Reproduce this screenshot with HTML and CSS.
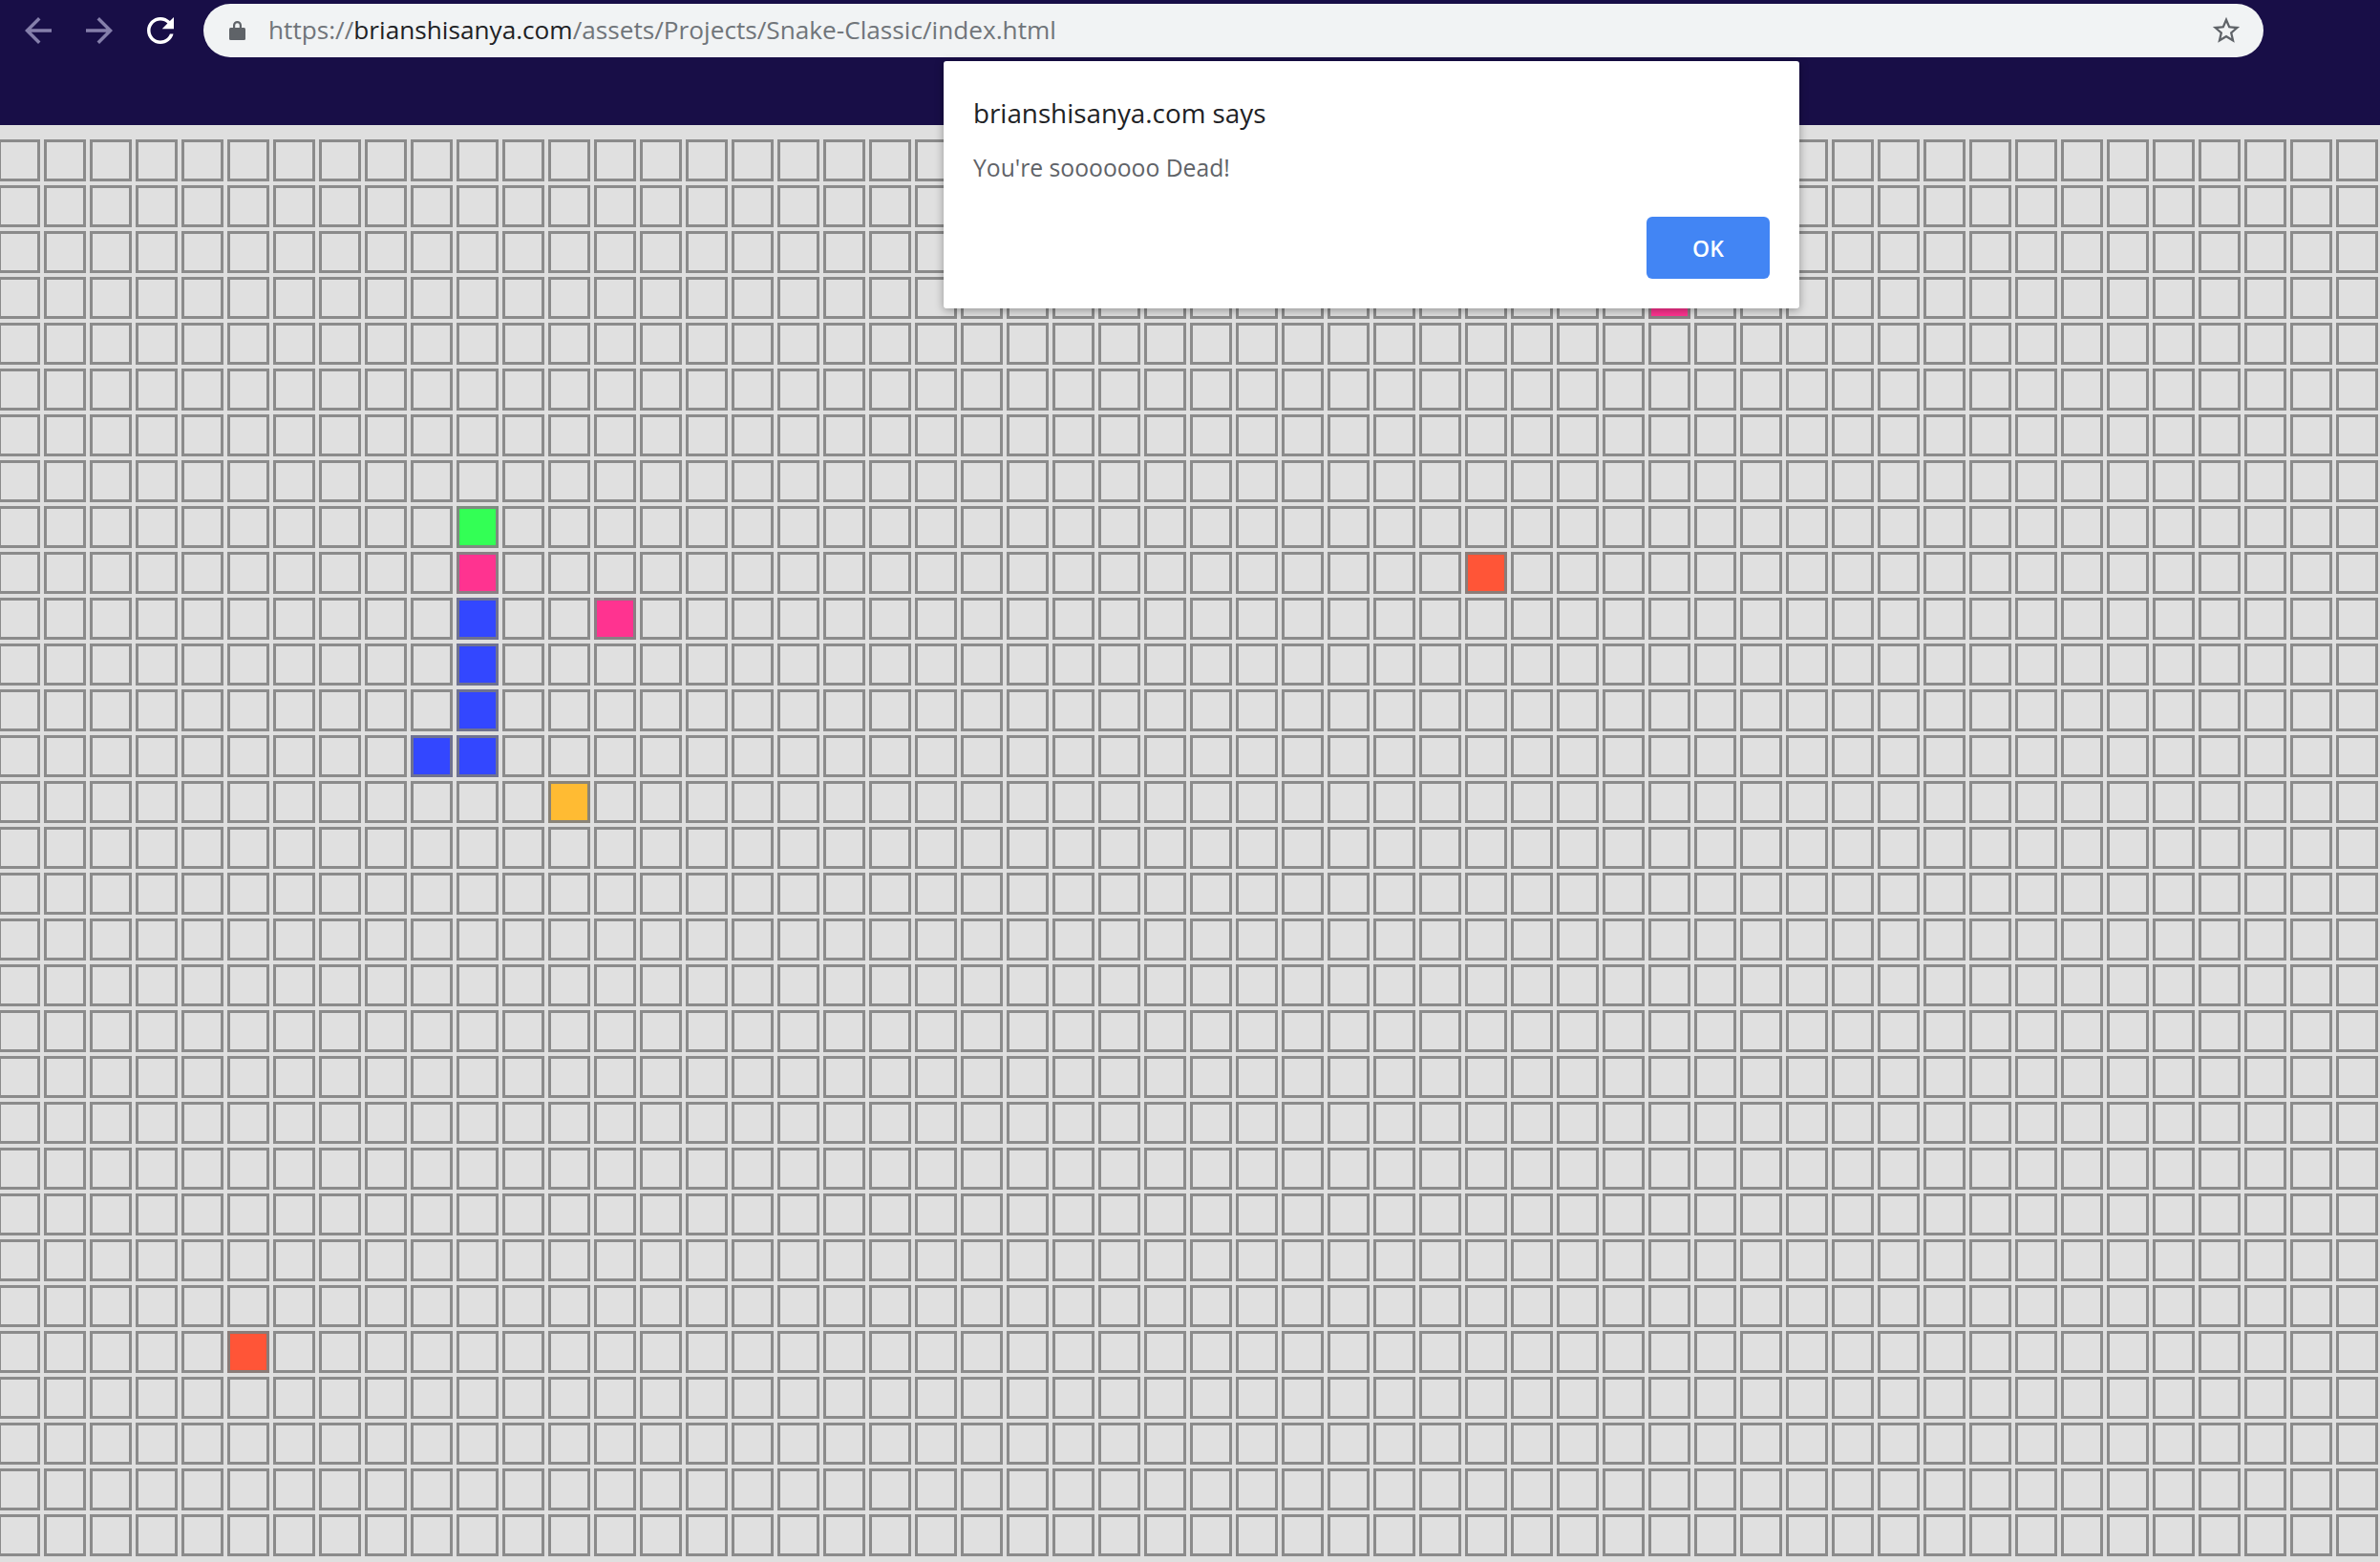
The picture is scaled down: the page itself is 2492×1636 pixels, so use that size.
FILE: index.html
```html
<!DOCTYPE html>
<html lang="en">
<head>
<meta charset="utf-8">
<title>Snake Classic</title>
<link rel="stylesheet" href="styles.css">
</head>
<body>
<header class="chrome">
  <div class="toolbar">
    <span class="nav-icon disabled">
      <svg viewBox="0 0 24 24" width="42" height="42"><path d="M20 11H7.83l5.59-5.59L12 4l-8 8 8 8 1.41-1.41L7.83 13H20v-2z" fill="currentColor"/></svg>
    </span>
    <span class="nav-icon disabled">
      <svg viewBox="0 0 24 24" width="42" height="42"><path d="M4 11h12.17l-5.59-5.59L12 4l8 8-8 8-1.41-1.41L16.170 13H4v-2z" fill="currentColor"/></svg>
    </span>
    <span class="nav-icon">
      <svg viewBox="0 0 24 24" width="42" height="42"><path d="M17.65 6.35C16.2 4.9 14.21 4 12 4c-4.420 0-7.99 3.58-7.99 8s3.57 8 7.99 8c3.73 0 6.84-2.55 7.73-6h-2.08c-.82 2.33-3.04 4-5.65 4-3.31 0-6-2.69-6-6s2.69-6 6-6c1.66 0 3.14.69 4.22 1.78L13 11h7V4l-2.35 2.35z" fill="currentColor"/></svg>
    </span>
    <div class="omnibox">
      <svg class="lock" viewBox="0 0 17 22" width="17" height="22"><path d="M4 9V6.5a4.5 4.5 0 0 1 9 0V9h-2.2V6.5a2.3 2.3 0 0 0-4.6 0V9z" fill="#5f6368"/><rect x="0" y="9" width="17" height="13" rx="1.5" fill="#5f6368"/></svg>
      <span class="url"><span class="dim">https://</span><span class="host">brianshisanya.com</span><span class="dim">/assets/Projects/Snake-Classic/index.html</span></span>
      <svg class="star" viewBox="0 0 24 24" width="34" height="34"><path d="M22 9.24l-7.19-.62L12 2 9.19 8.63 2 9.24l5.46 4.73L5.82 21 12 17.27 18.18 21l-1.63-7.03L22 9.24zM12 15.4l-3.76 2.27 1-4.28-3.32-2.88 4.38-.38L12 6.1l1.71 4.04 4.38.38-3.32 2.88 1 4.28L12 15.4z" fill="#5f6368"/></svg>
    </div>
  </div>
</header>

<main class="board">
  <!-- row 0 -->
  <div class="row"><i></i><i></i><i></i><i></i><i></i><i></i><i></i><i></i><i></i><i></i> <i></i><i></i><i></i><i></i><i></i><i></i><i></i><i></i><i></i><i></i> <i></i><i></i><i></i><i></i><i></i><i></i><i></i><i></i><i></i><i></i> <i></i><i></i><i></i><i></i><i></i><i></i><i></i><i></i><i></i><i></i> <i></i><i></i><i></i><i></i><i></i><i></i><i></i><i></i><i></i><i></i> <i></i><i></i></div>
  <!-- row 1 -->
  <div class="row"><i></i><i></i><i></i><i></i><i></i><i></i><i></i><i></i><i></i><i></i> <i></i><i></i><i></i><i></i><i></i><i></i><i></i><i></i><i></i><i></i> <i></i><i></i><i></i><i></i><i></i><i></i><i></i><i></i><i></i><i></i> <i></i><i></i><i></i><i></i><i></i><i></i><i></i><i></i><i></i><i></i> <i></i><i></i><i></i><i></i><i></i><i></i><i></i><i></i><i></i><i></i> <i></i><i></i></div>
  <!-- row 2 -->
  <div class="row"><i></i><i></i><i></i><i></i><i></i><i></i><i></i><i></i><i></i><i></i> <i></i><i></i><i></i><i></i><i></i><i></i><i></i><i></i><i></i><i></i> <i></i><i></i><i></i><i></i><i></i><i></i><i></i><i></i><i></i><i></i> <i></i><i></i><i></i><i></i><i></i><i></i><i></i><i></i><i></i><i></i> <i></i><i></i><i></i><i></i><i></i><i></i><i></i><i></i><i></i><i></i> <i></i><i></i></div>
  <!-- row 3 -->
  <div class="row"><i></i><i></i><i></i><i></i><i></i><i></i><i></i><i></i><i></i><i></i> <i></i><i></i><i></i><i></i><i></i><i></i><i></i><i></i><i></i><i></i> <i></i><i></i><i></i><i></i><i></i><i></i><i></i><i></i><i></i><i></i> <i></i><i></i><i></i><i></i><i></i> <i></i> <i class="pink"></i> <i></i><i></i><i></i><i></i><i></i><i></i><i></i><i></i><i></i><i></i> <i></i><i></i><i></i><i></i><i></i></div>
  <!-- row 4 -->
  <div class="row"><i></i><i></i><i></i><i></i><i></i><i></i><i></i><i></i><i></i><i></i> <i></i><i></i><i></i><i></i><i></i><i></i><i></i><i></i><i></i><i></i> <i></i><i></i><i></i><i></i><i></i><i></i><i></i><i></i><i></i><i></i> <i></i><i></i><i></i><i></i><i></i><i></i><i></i><i></i><i></i><i></i> <i></i><i></i><i></i><i></i><i></i><i></i><i></i><i></i><i></i><i></i> <i></i><i></i></div>
  <!-- row 5 -->
  <div class="row"><i></i><i></i><i></i><i></i><i></i><i></i><i></i><i></i><i></i><i></i> <i></i><i></i><i></i><i></i><i></i><i></i><i></i><i></i><i></i><i></i> <i></i><i></i><i></i><i></i><i></i><i></i><i></i><i></i><i></i><i></i> <i></i><i></i><i></i><i></i><i></i><i></i><i></i><i></i><i></i><i></i> <i></i><i></i><i></i><i></i><i></i><i></i><i></i><i></i><i></i><i></i> <i></i><i></i></div>
  <!-- row 6 -->
  <div class="row"><i></i><i></i><i></i><i></i><i></i><i></i><i></i><i></i><i></i><i></i> <i></i><i></i><i></i><i></i><i></i><i></i><i></i><i></i><i></i><i></i> <i></i><i></i><i></i><i></i><i></i><i></i><i></i><i></i><i></i><i></i> <i></i><i></i><i></i><i></i><i></i><i></i><i></i><i></i><i></i><i></i> <i></i><i></i><i></i><i></i><i></i><i></i><i></i><i></i><i></i><i></i> <i></i><i></i></div>
  <!-- row 7 -->
  <div class="row"><i></i><i></i><i></i><i></i><i></i><i></i><i></i><i></i><i></i><i></i> <i></i><i></i><i></i><i></i><i></i><i></i><i></i><i></i><i></i><i></i> <i></i><i></i><i></i><i></i><i></i><i></i><i></i><i></i><i></i><i></i> <i></i><i></i><i></i><i></i><i></i><i></i><i></i><i></i><i></i><i></i> <i></i><i></i><i></i><i></i><i></i><i></i><i></i><i></i><i></i><i></i> <i></i><i></i></div>
  <!-- row 8 -->
  <div class="row"><i></i><i></i><i></i><i></i><i></i><i></i><i></i><i></i><i></i><i></i> <i class="green"></i> <i></i><i></i><i></i><i></i><i></i><i></i><i></i><i></i><i></i><i></i> <i></i><i></i><i></i><i></i><i></i><i></i><i></i><i></i><i></i><i></i> <i></i><i></i><i></i><i></i><i></i><i></i><i></i><i></i><i></i><i></i> <i></i><i></i><i></i><i></i><i></i><i></i><i></i><i></i><i></i><i></i> <i></i></div>
  <!-- row 9 -->
  <div class="row"><i></i><i></i><i></i><i></i><i></i><i></i><i></i><i></i><i></i><i></i> <i class="pink"></i> <i></i><i></i><i></i><i></i><i></i><i></i><i></i><i></i><i></i><i></i> <i></i><i></i><i></i><i></i><i></i><i></i><i></i><i></i><i></i><i></i> <i></i> <i class="orange"></i> <i></i><i></i><i></i><i></i><i></i><i></i><i></i><i></i><i></i><i></i> <i></i><i></i><i></i><i></i><i></i> <i></i><i></i> <i></i><i></i></div>
  <!-- row 10 -->
  <div class="row"><i></i><i></i><i></i><i></i><i></i><i></i><i></i><i></i><i></i><i></i> <i class="blue"></i> <i></i><i></i> <i class="pink"></i> <i></i><i></i><i></i><i></i><i></i><i></i><i></i><i></i><i></i><i></i> <i></i><i></i><i></i><i></i><i></i><i></i><i></i><i></i><i></i><i></i> <i></i><i></i><i></i><i></i><i></i><i></i><i></i><i></i><i></i><i></i> <i></i><i></i><i></i><i></i><i></i> <i></i><i></i> <i></i></div>
  <!-- row 11 -->
  <div class="row"><i></i><i></i><i></i><i></i><i></i><i></i><i></i><i></i><i></i><i></i> <i class="blue"></i> <i></i><i></i><i></i><i></i><i></i><i></i><i></i><i></i><i></i><i></i> <i></i><i></i><i></i><i></i><i></i><i></i><i></i><i></i><i></i><i></i> <i></i><i></i><i></i><i></i><i></i><i></i><i></i><i></i><i></i><i></i> <i></i><i></i><i></i><i></i><i></i><i></i><i></i><i></i><i></i><i></i> <i></i></div>
  <!-- row 12 -->
  <div class="row"><i></i><i></i><i></i><i></i><i></i><i></i><i></i><i></i><i></i><i></i> <i class="blue"></i> <i></i><i></i><i></i><i></i><i></i><i></i><i></i><i></i><i></i><i></i> <i></i><i></i><i></i><i></i><i></i><i></i><i></i><i></i><i></i><i></i> <i></i><i></i><i></i><i></i><i></i><i></i><i></i><i></i><i></i><i></i> <i></i><i></i><i></i><i></i><i></i><i></i><i></i><i></i><i></i><i></i> <i></i></div>
  <!-- row 13 -->
  <div class="row"><i></i><i></i><i></i><i></i><i></i> <i></i><i></i> <i></i><i></i> <i class="blue"></i><i class="blue"></i> <i></i><i></i><i></i><i></i><i></i><i></i><i></i><i></i><i></i><i></i> <i></i><i></i><i></i><i></i><i></i><i></i><i></i><i></i><i></i><i></i> <i></i><i></i><i></i><i></i><i></i><i></i><i></i><i></i><i></i><i></i> <i></i><i></i><i></i><i></i><i></i><i></i><i></i><i></i><i></i><i></i> <i></i></div>
  <!-- row 14 -->
  <div class="row"><i></i><i></i><i></i><i></i><i></i><i></i><i></i><i></i><i></i><i></i> <i></i><i></i> <i class="yellow"></i> <i></i><i></i><i></i><i></i><i></i><i></i><i></i><i></i><i></i><i></i> <i></i><i></i><i></i><i></i><i></i><i></i><i></i><i></i><i></i><i></i> <i></i><i></i><i></i><i></i><i></i><i></i><i></i><i></i><i></i><i></i> <i></i><i></i><i></i><i></i><i></i> <i></i><i></i> <i></i><i></i></div>
  <!-- row 15 -->
  <div class="row"><i></i><i></i><i></i><i></i><i></i><i></i><i></i><i></i><i></i><i></i> <i></i><i></i><i></i><i></i><i></i><i></i><i></i><i></i><i></i><i></i> <i></i><i></i><i></i><i></i><i></i><i></i><i></i><i></i><i></i><i></i> <i></i><i></i><i></i><i></i><i></i><i></i><i></i><i></i><i></i><i></i> <i></i><i></i><i></i><i></i><i></i><i></i><i></i><i></i><i></i><i></i> <i></i><i></i></div>
  <!-- row 16 -->
  <div class="row"><i></i><i></i><i></i><i></i><i></i><i></i><i></i><i></i><i></i><i></i> <i></i><i></i><i></i><i></i><i></i><i></i><i></i><i></i><i></i><i></i> <i></i><i></i><i></i><i></i><i></i><i></i><i></i><i></i><i></i><i></i> <i></i><i></i><i></i><i></i><i></i><i></i><i></i><i></i><i></i><i></i> <i></i><i></i><i></i><i></i><i></i><i></i><i></i><i></i><i></i><i></i> <i></i><i></i></div>
  <!-- row 17 -->
  <div class="row"><i></i><i></i><i></i><i></i><i></i><i></i><i></i><i></i><i></i><i></i> <i></i><i></i><i></i><i></i><i></i><i></i><i></i><i></i><i></i><i></i> <i></i><i></i><i></i><i></i><i></i><i></i><i></i><i></i><i></i><i></i> <i></i><i></i><i></i><i></i><i></i><i></i><i></i><i></i><i></i><i></i> <i></i><i></i><i></i><i></i><i></i><i></i><i></i><i></i><i></i><i></i> <i></i><i></i></div>
  <!-- row 18 -->
  <div class="row"><i></i><i></i><i></i><i></i><i></i><i></i><i></i><i></i><i></i><i></i> <i></i><i></i><i></i><i></i><i></i><i></i><i></i><i></i><i></i><i></i> <i></i><i></i><i></i><i></i><i></i><i></i><i></i><i></i><i></i><i></i> <i></i><i></i><i></i><i></i><i></i><i></i><i></i><i></i><i></i><i></i> <i></i><i></i><i></i><i></i><i></i><i></i><i></i><i></i><i></i><i></i> <i></i><i></i></div>
  <!-- row 19 -->
  <div class="row"><i></i><i></i><i></i><i></i><i></i><i></i><i></i><i></i><i></i><i></i> <i></i><i></i><i></i><i></i><i></i><i></i><i></i><i></i><i></i><i></i> <i></i><i></i><i></i><i></i><i></i><i></i><i></i><i></i><i></i><i></i> <i></i><i></i><i></i><i></i><i></i><i></i><i></i><i></i><i></i><i></i> <i></i><i></i><i></i><i></i><i></i><i></i><i></i><i></i><i></i><i></i> <i></i><i></i></div>
  <!-- row 20 -->
  <div class="row"><i></i><i></i><i></i><i></i><i></i><i></i><i></i><i></i><i></i><i></i> <i></i><i></i><i></i><i></i><i></i><i></i><i></i><i></i><i></i><i></i> <i></i><i></i><i></i><i></i><i></i><i></i><i></i><i></i><i></i><i></i> <i></i><i></i><i></i><i></i><i></i><i></i><i></i><i></i><i></i><i></i> <i></i><i></i><i></i><i></i><i></i><i></i><i></i><i></i><i></i><i></i> <i></i><i></i></div>
  <!-- row 21 -->
  <div class="row"><i></i><i></i><i></i><i></i><i></i><i></i><i></i><i></i><i></i><i></i> <i></i><i></i><i></i><i></i><i></i><i></i><i></i><i></i><i></i><i></i> <i></i><i></i><i></i><i></i><i></i><i></i><i></i><i></i><i></i><i></i> <i></i><i></i><i></i><i></i><i></i><i></i><i></i><i></i><i></i><i></i> <i></i><i></i><i></i><i></i><i></i><i></i><i></i><i></i><i></i><i></i> <i></i><i></i></div>
  <!-- row 22 -->
  <div class="row"><i></i><i></i><i></i><i></i><i></i><i></i><i></i><i></i><i></i><i></i> <i></i><i></i><i></i><i></i><i></i><i></i><i></i><i></i><i></i><i></i> <i></i><i></i><i></i><i></i><i></i><i></i><i></i><i></i><i></i><i></i> <i></i><i></i><i></i><i></i><i></i><i></i><i></i><i></i><i></i><i></i> <i></i><i></i><i></i><i></i><i></i><i></i><i></i><i></i><i></i><i></i> <i></i><i></i></div>
  <!-- row 23 -->
  <div class="row"><i></i><i></i><i></i><i></i><i></i><i></i><i></i><i></i><i></i><i></i> <i></i><i></i><i></i><i></i><i></i><i></i><i></i><i></i><i></i><i></i> <i></i><i></i><i></i><i></i><i></i><i></i><i></i><i></i><i></i><i></i> <i></i><i></i><i></i><i></i><i></i><i></i><i></i><i></i><i></i><i></i> <i></i><i></i><i></i><i></i><i></i><i></i><i></i><i></i><i></i><i></i> <i></i><i></i></div>
  <!-- row 24 -->
  <div class="row"><i></i><i></i><i></i><i></i><i></i><i></i><i></i><i></i><i></i><i></i> <i></i><i></i><i></i><i></i><i></i><i></i><i></i><i></i><i></i><i></i> <i></i><i></i><i></i><i></i><i></i><i></i><i></i><i></i><i></i><i></i> <i></i><i></i><i></i><i></i><i></i><i></i><i></i><i></i><i></i><i></i> <i></i><i></i><i></i><i></i><i></i><i></i><i></i><i></i><i></i><i></i> <i></i><i></i></div>
  <!-- row 25 -->
  <div class="row"><i></i><i></i><i></i><i></i><i></i><i></i><i></i><i></i><i></i><i></i> <i></i><i></i><i></i><i></i><i></i><i></i><i></i><i></i><i></i><i></i> <i></i><i></i><i></i><i></i><i></i><i></i><i></i><i></i><i></i><i></i> <i></i><i></i><i></i><i></i><i></i><i></i><i></i><i></i><i></i><i></i> <i></i><i></i><i></i><i></i><i></i><i></i><i></i><i></i><i></i><i></i> <i></i><i></i></div>
  <!-- row 26 -->
  <div class="row"><i></i><i></i><i></i><i></i><i></i> <i class="orange"></i> <i></i><i></i><i></i><i></i><i></i><i></i><i></i><i></i><i></i><i></i> <i></i><i></i><i></i><i></i><i></i><i></i><i></i><i></i><i></i><i></i> <i></i><i></i><i></i><i></i><i></i><i></i><i></i><i></i><i></i><i></i> <i></i><i></i><i></i><i></i><i></i><i></i><i></i><i></i><i></i><i></i> <i></i><i></i><i></i><i></i><i></i> <i></i></div>
  <!-- row 27 -->
  <div class="row"><i></i><i></i><i></i><i></i><i></i><i></i><i></i><i></i><i></i><i></i> <i></i><i></i><i></i><i></i><i></i><i></i><i></i><i></i><i></i><i></i> <i></i><i></i><i></i><i></i><i></i><i></i><i></i><i></i><i></i><i></i> <i></i><i></i><i></i><i></i><i></i><i></i><i></i><i></i><i></i><i></i> <i></i><i></i><i></i><i></i><i></i><i></i><i></i><i></i><i></i><i></i> <i></i><i></i></div>
  <!-- row 28 -->
  <div class="row"><i></i><i></i><i></i><i></i><i></i><i></i><i></i><i></i><i></i><i></i> <i></i><i></i><i></i><i></i><i></i><i></i><i></i><i></i><i></i><i></i> <i></i><i></i><i></i><i></i><i></i><i></i><i></i><i></i><i></i><i></i> <i></i><i></i><i></i><i></i><i></i><i></i><i></i><i></i><i></i><i></i> <i></i><i></i><i></i><i></i><i></i><i></i><i></i><i></i><i></i><i></i> <i></i><i></i></div>
  <!-- row 29 -->
  <div class="row"><i></i><i></i><i></i><i></i><i></i><i></i><i></i><i></i><i></i><i></i> <i></i><i></i><i></i><i></i><i></i><i></i><i></i><i></i><i></i><i></i> <i></i><i></i><i></i><i></i><i></i><i></i><i></i><i></i><i></i><i></i> <i></i><i></i><i></i><i></i><i></i><i></i><i></i><i></i><i></i><i></i> <i></i><i></i><i></i><i></i><i></i><i></i><i></i><i></i><i></i><i></i> <i></i><i></i></div>
  <!-- row 30 -->
  <div class="row"><i></i><i></i><i></i><i></i><i></i><i></i><i></i><i></i><i></i><i></i> <i></i><i></i><i></i><i></i><i></i><i></i><i></i><i></i><i></i><i></i> <i></i><i></i><i></i><i></i><i></i><i></i><i></i><i></i><i></i><i></i> <i></i><i></i><i></i><i></i><i></i><i></i><i></i><i></i><i></i><i></i> <i></i><i></i><i></i><i></i><i></i><i></i><i></i><i></i><i></i><i></i> <i></i><i></i></div>
</main>

<div class="dialog" role="alertdialog">
  <div class="dialog-title">brianshisanya.com says</div>
  <div class="dialog-message">You're sooooooo Dead!</div>
  <div class="dialog-actions"><button class="ok">OK</button></div>
</div>
</body>
</html>
```

FILE: styles.css
```css
html, body {
  margin: 0;
  padding: 0;
}

body {
  width: 2492px;
  height: 1636px;
  overflow: hidden;
  background: #dfdfdf;
  font-family: "Open Sans", "Noto Sans", sans-serif;
}

/* ---------- browser chrome ---------- */
.chrome {
  height: 131px;
  background: #180e47;
}

.toolbar {
  height: 64px;
  display: flex;
  align-items: center;
  padding-left: 19px;
}

.nav-icon {
  width: 42px;
  height: 42px;
  margin-right: 22px;
  color: #ffffff;
  display: flex;
}

.nav-icon.disabled {
  color: #857fab;
}

.nav-icon:nth-child(3) {
  margin-right: 24px;
}

.omnibox {
  width: 2157px;
  height: 56px;
  box-sizing: border-box;
  border-radius: 28px;
  background: #f1f3f4;
  display: flex;
  align-items: center;
  padding-left: 27px;
  padding-right: 22px;
}

.lock {
  flex: none;
  margin-right: 24px;
  margin-top: -2px;
}

.url {
  flex: 1;
  font-size: 26.2px;
  line-height: 1;
  white-space: nowrap;
  margin-top: -2px;
}

.url .dim {
  color: #70757a;
}

.url .host {
  color: #202124;
}

.star {
  flex: none;
}

/* ---------- game board ---------- */
.board {
  display: flex;
  flex-direction: column;
  gap: 4px;
  padding-top: 15px;
  margin-left: -2px;
}

.row {
  display: flex;
  gap: 4px;
}

.row i {
  flex: none;
  display: block;
  width: 44px;
  height: 44px;
  box-sizing: border-box;
  border: 3px solid #8b8b8b;
  background: #e0e0e0;
}

.row i.green  { background: #33ff55; border-color: #7f8a80; }
.row i.pink   { background: #ff3390; border-color: #8a7f84; }
.row i.blue   { background: #3347ff; border-color: #6f7290; }
.row i.yellow { background: #ffbb33; border-color: #8a8478; }
.row i.orange { background: #ff5537; border-color: #8a7c78; }

/* ---------- alert dialog ---------- */
.dialog {
  position: absolute;
  left: 988px;
  top: 64px;
  width: 896px;
  box-sizing: border-box;
  padding: 38px 31px 31px 31px;
  background: #ffffff;
  border-radius: 3px;
  box-shadow: 0 2px 10px rgba(0, 0, 0, 0.35);
}

.dialog-title {
  font-size: 27.8px;
  line-height: 33px;
  color: #202124;
}

.dialog-message {
  margin-top: 26px;
  font-size: 24.7px;
  line-height: 30px;
  color: #5f6368;
}

.dialog-actions {
  margin-top: 36px;
  display: flex;
  justify-content: flex-end;
}

.ok {
  width: 129px;
  height: 65px;
  border: none;
  border-radius: 6px;
  background: #4285f4;
  color: #ffffff;
  font-family: "Open Sans", "Noto Sans", sans-serif;
  font-size: 23px;
  font-weight: 600;
  padding: 0;
}
```
